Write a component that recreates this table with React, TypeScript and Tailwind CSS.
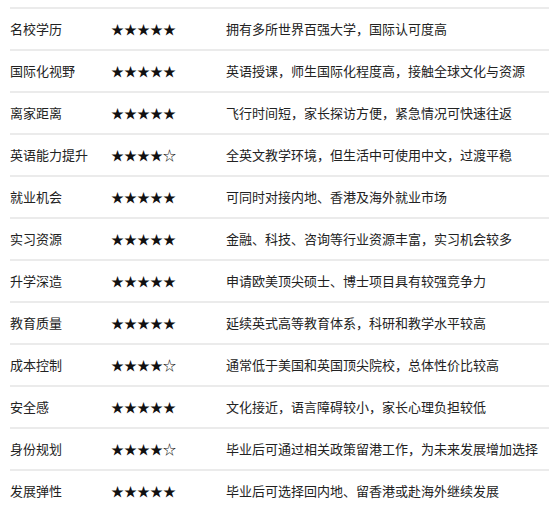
import React from 'react';

const rows: [string, number, string][] = [
  ['名校学历', 5, '拥有多所世界百强大学，国际认可度高'],
  ['国际化视野', 5, '英语授课，师生国际化程度高，接触全球文化与资源'],
  ['离家距离', 5, '飞行时间短，家长探访方便，紧急情况可快速往返'],
  ['英语能力提升', 4, '全英文教学环境，但生活中可使用中文，过渡平稳'],
  ['就业机会', 5, '可同时对接内地、香港及海外就业市场'],
  ['实习资源', 5, '金融、科技、咨询等行业资源丰富，实习机会较多'],
  ['升学深造', 5, '申请欧美顶尖硕士、博士项目具有较强竞争力'],
  ['教育质量', 5, '延续英式高等教育体系，科研和教学水平较高'],
  ['成本控制', 4, '通常低于美国和英国顶尖院校，总体性价比较高'],
  ['安全感', 5, '文化接近，语言障碍较小，家长心理负担较低'],
  ['身份规划', 4, '毕业后可通过相关政策留港工作，为未来发展增加选择'],
  ['发展弹性', 5, '毕业后可选择回内地、留香港或赴海外继续发展'],
];

export default function App() {
  return (
    <div className="bg-white pl-[10px] pr-px pt-[7px] text-[13px] text-[#222] font-['Noto_Sans_CJK_SC','Noto_Sans',sans-serif]">
      {rows.map(([name, score, desc]) => (
        <div key={name} className="flex h-[42px] items-center border-t-2 border-[#ebebeb]">
          <div className="w-[101px] shrink-0">{name}</div>
          <div className="w-[115px] shrink-0 font-['Noto_Sans_CJK_SC',sans-serif] text-[#111]">
            {'★'.repeat(score) + '☆'.repeat(5 - score)}
          </div>
          <div className="flex-1">{desc}</div>
        </div>
      ))}
    </div>
  );
}
